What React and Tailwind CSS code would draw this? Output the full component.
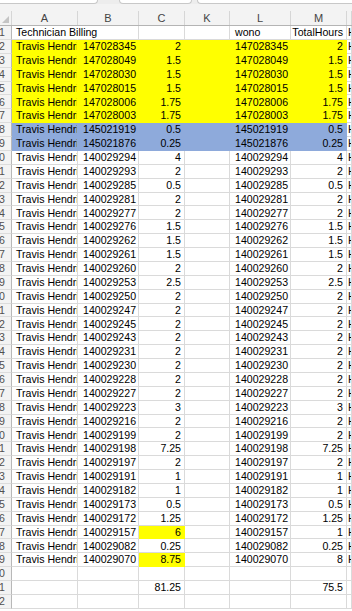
import React from 'react'

const YELLOW = [
  ['147028345', '2'],
  ['147028049', '1.5'],
  ['147028030', '1.5'],
  ['147028015', '1.5'],
  ['147028006', '1.75'],
  ['147028003', '1.75'],
]

const BLUE = [
  ['145021919', '0.5'],
  ['145021876', '0.25'],
]

// [wono, billed hours, total hours (if different), billed cell highlighted]
const PLAIN = [
  ['140029294', '4'], ['140029293', '2'], ['140029285', '0.5'], ['140029281', '2'],
  ['140029277', '2'], ['140029276', '1.5'], ['140029262', '1.5'], ['140029261', '1.5'],
  ['140029260', '2'], ['140029253', '2.5'], ['140029250', '2'], ['140029247', '2'],
  ['140029245', '2'], ['140029243', '2'], ['140029231', '2'], ['140029230', '2'],
  ['140029228', '2'], ['140029227', '2'], ['140029223', '3'], ['140029216', '2'],
  ['140029199', '2'], ['140029198', '7.25'], ['140029197', '2'], ['140029191', '1'],
  ['140029182', '1'], ['140029173', '0.5'], ['140029172', '1.25'],
  ['140029157', '6', '1', true], ['140029082', '0.25'], ['140029070', '8.75', '8', true],
]

const ROWS = [
  { a: 'Technician Billing', l: 'wono', m: 'TotalHours', n: 'Hrs', title: true },
  ...YELLOW.map(([w, h]) => ({ a: 'Travis Hendrix', b: w, c: h, l: w, m: h, n: 'Hrs', fill: 'yellow' })),
  ...BLUE.map(([w, h]) => ({ a: 'Travis Hendrix', b: w, c: h, l: w, m: h, n: 'Hrs', fill: 'blue' })),
  ...PLAIN.map(([w, h, t, hi]) => ({ a: 'Travis Hendrix', b: w, c: h, l: w, m: t || h, n: 'Hrs', hiC: hi })),
  {},
  { c: '81.25', m: '75.5' },
  {},
]

const HEADERS = ['A', 'B', 'C', 'K', 'L', 'M', '']

const GRID = 'grid grid-cols-[12px_66px_61px_46px_45px_61px_56px_1fr]'

function Cell({ children, fill, right, pl, spill }) {
  const base = 'h-[13.875px] flex items-center whitespace-nowrap border-r border-b '
  const fillCls =
    fill === 'yellow' ? 'bg-[#ffff00] border-transparent'
    : fill === 'blue' ? 'bg-[#8eaadb] border-transparent'
    : spill ? 'border-r-transparent border-b-[#dadada]'
    : 'border-[#dadada]'
  const alignCls = right ? 'justify-end pr-[3px]' : pl
  return (
    <div className={`${base}${fillCls} ${alignCls} ${spill ? 'overflow-visible' : 'overflow-hidden'}`}>
      {children}
    </div>
  )
}

function Row({ row, n }) {
  const f = row.fill
  return (
    <div className={GRID}>
      <div className="h-[13.875px] flex items-center justify-end pr-[6px] overflow-hidden bg-[#f3f3f3] border-r border-r-[#b8b8b8] border-b border-b-[#dcdcdc] text-[#505050]">
        {n}
      </div>
      <Cell fill={f} pl="pl-[4px]" spill={row.title}>{row.a}</Cell>
      <Cell fill={f} pl="pl-[5px]">{row.b}</Cell>
      <Cell fill={row.hiC ? 'yellow' : f} right>{row.c}</Cell>
      <Cell fill={f} />
      <Cell fill={f} pl="pl-[5px]">{row.l}</Cell>
      <Cell fill={f} right>{row.m}</Cell>
      <Cell pl="pl-[1px]">{row.n}</Cell>
    </div>
  )
}

export default function App() {
  return (
    <div className="w-[352px] h-[611px] overflow-hidden bg-white font-['Liberation_Sans',Arial,sans-serif] text-[10.6px] leading-none text-black">
      {/* window tabs peeking at the top */}
      <div className="flex h-[4px] bg-[#ededed]">
        <div className="w-[98px] bg-white border-b border-r border-[#c8c8c8] rounded-br-[6px]" />
        <div className="ml-[21px] w-[73px] bg-white border-b border-x border-[#c8c8c8] rounded-b-[6px]" />
        <div className="ml-[5px] flex-1 bg-white border-b border-l border-[#c8c8c8] rounded-bl-[6px]" />
      </div>
      <div className="h-[7px] bg-[#f3f3f3]" />

      {/* column headers */}
      <div className={`${GRID} h-[15px] bg-[#f3f3f3] border-b border-[#b4b4b4] text-[#444] text-[11px]`}>
        <div className="relative border-r border-[#d6d6d6]">
          <svg className="absolute right-[2px] bottom-[2px]" width="7" height="7" viewBox="0 0 7 7">
            <path d="M7 0 L7 7 L0 7 Z" fill="#c4c4c4" />
          </svg>
        </div>
        {HEADERS.map((h, i) => (
          <div key={i} className="flex items-center justify-center border-r border-[#d6d6d6]">{h}</div>
        ))}
      </div>

      {ROWS.map((r, i) => (
        <Row key={i} row={r} n={i + 1} />
      ))}
    </div>
  )
}
